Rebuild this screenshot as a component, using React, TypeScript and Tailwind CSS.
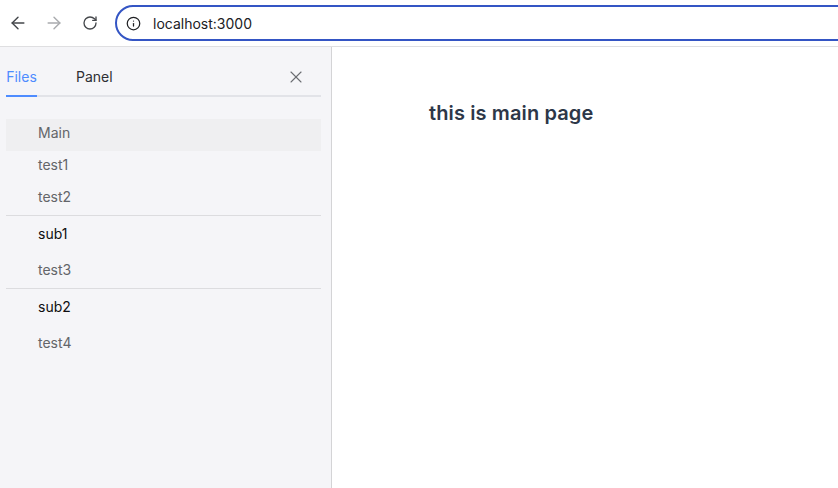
import React from 'react';
import { ArrowLeft, ArrowRight, RotateCw, Info, X } from 'lucide-react';

const Item: React.FC<{ label: string; active?: boolean }> = ({ label, active }) => (
    <div className={`flex h-8 items-center pb-1.5 pl-8 text-[14px] text-[#636569] ${active ? 'bg-[#efeff1]' : ''}`}>{label}</div>
);

const SubMenu: React.FC<{ label: string; child: string }> = ({ label, child }) => (
    <div className="border-t border-[#dcdcdf]">
        <div className="flex h-9 items-center pb-0.5 pl-8 text-[14px] font-normal text-[#0e0e10]">{label}</div>
        <div className="mt-1">
            <Item label={child} />
        </div>
    </div>
);

export default function App() {
    return (
        <div className="flex h-[488px] w-[838px] flex-col overflow-hidden bg-white font-['Inter',sans-serif]">
            <div className="flex h-[47px] shrink-0 items-center border-b border-[#dfdfe1] bg-white pl-[8px]">
                <ArrowLeft size={20} strokeWidth={1.7} className="shrink-0 text-[#44474b]" />
                <ArrowRight size={20} strokeWidth={1.7} className="ml-[16px] shrink-0 text-[#a9abae]" />
                <RotateCw size={16} strokeWidth={2} className="ml-[18px] shrink-0 text-[#44474b]" />
                <div className="ml-[17px] flex h-[36px] w-[760px] shrink-0 items-center rounded-full border-2 border-[#3455c4] pl-[9px]">
                    <Info size={15} strokeWidth={2} className="shrink-0 text-[#202124]" />
                    <span className="ml-[12px] text-[14px] text-[#202124]">localhost:3000</span>
                </div>
            </div>
            <div className="flex min-h-0 flex-1">
                <div className="w-[332px] shrink-0 border-r border-[#d4d4d6] bg-[#f5f5f8] pl-1.5 pr-2.5">
                    <div className="flex h-[50px] items-start border-b-2 border-[#e2e3e8]">
                        <div className="relative flex h-[48px] w-[31px] items-center justify-center pt-[10px] text-[14px] text-[#4e8cff]">
                            Files
                            <div className="absolute bottom-[-2px] left-0 h-0.5 w-full bg-[#4e8cff]" />
                        </div>
                        <div className="ml-[39px] flex h-[48px] items-center pt-[10px] text-[14px] text-[#2e2f33]">Panel</div>
                        <button className="ml-auto mr-[15px] flex h-[48px] items-center pt-[12px] text-[#6b6d72]">
                            <X size={20} strokeWidth={1.3} />
                        </button>
                    </div>
                    <div className="mt-[22px]">
                        <Item label="Main" active />
                        <Item label="test1" />
                        <Item label="test2" />
                        <SubMenu label="sub1" child="test3" />
                        <SubMenu label="sub2" child="test4" />
                    </div>
                </div>
                <div className="flex-1 pl-[97px] pt-[52px]">
                    <h1 className="text-[20px] leading-7 font-semibold tracking-[0.12px] text-[#2d3748]">this is main page</h1>
                </div>
            </div>
        </div>
    );
}
